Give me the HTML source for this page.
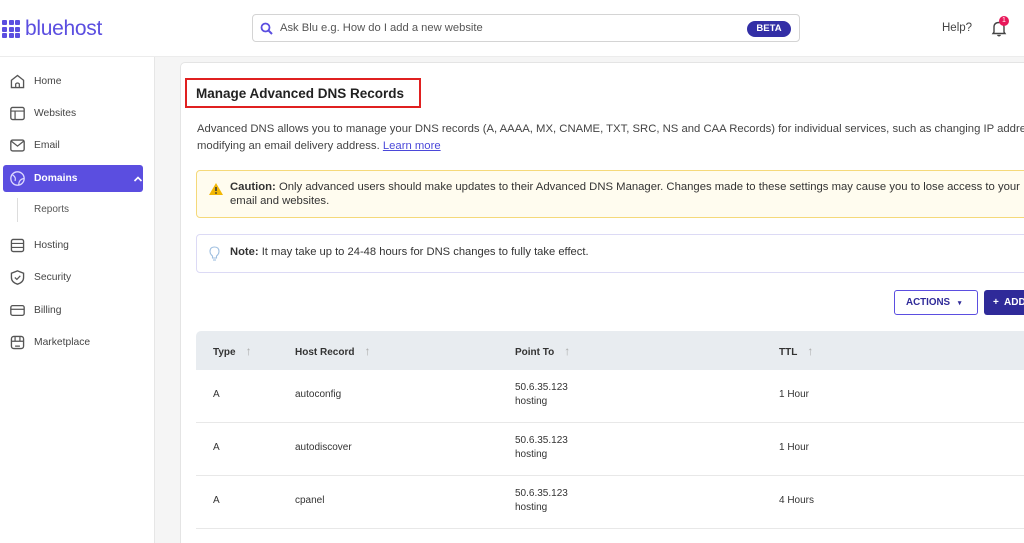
<!DOCTYPE html>
<html><head><meta charset="utf-8"><style>
*{box-sizing:border-box;margin:0;padding:0}
html,body{width:1024px;height:543px;overflow:hidden}
body{background:#f5f5f5;font-family:"Liberation Sans",sans-serif;color:#333;position:relative}
.hdr{position:absolute;left:0;top:0;width:1024px;height:57px;background:#fff;border-bottom:1px solid #ececec}
.logo{position:absolute;left:2px;top:17px;display:flex;align-items:center}
.grid{display:grid;grid-template-columns:repeat(3,5px);gap:1.5px;margin-right:5px}
.grid i{width:5px;height:5px;background:#5b4ee0;display:block;border-radius:1px}
.logo span{font-size:21px;color:#5b4ee0;letter-spacing:-0.3px;line-height:24px}
.search{position:absolute;left:252px;top:14px;width:548px;height:28px;border:1px solid #d4d4d4;border-radius:4px;font-size:11.2px;color:#555}
.search .t{position:absolute;left:27px;top:7px}
.beta{position:absolute;left:494px;top:6px;width:44px;height:16px;background:#332fa6;color:#fff;border-radius:8px;font-size:9.5px;font-weight:bold;text-align:center;line-height:16px}
.help{position:absolute;left:942px;top:22px;font-size:11.5px;color:#444}
.side{position:absolute;left:0;top:57px;width:155px;height:486px;background:#fff;border-right:1px solid #e6e6e6}
.nav{position:absolute;left:9px;font-size:10.3px;color:#444;display:flex;align-items:center}
.nav svg{margin-right:6px}
.active{position:absolute;left:3px;top:165px;width:140px;height:27px;background:#5b4ee0;border-radius:3px}
.card{position:absolute;left:180px;top:62px;width:860px;height:490px;background:#fff;border:1px solid #e4e4e4;border-radius:5px}
.title{position:absolute;left:185px;top:78px;width:236px;height:30px;border:2px solid #e02020}
.title span{position:absolute;left:9px;top:6px;font-size:13.5px;font-weight:bold;color:#222}
.p{position:absolute;left:197px;top:121px;font-size:11.3px;line-height:17px;color:#444;white-space:nowrap}
.p a{color:#4b48d9;text-decoration:underline}
.caution{position:absolute;left:196px;top:170px;width:850px;height:48px;background:#fffcef;border:1px solid #f5d97a;border-radius:4px}
.caution .t{position:absolute;left:33px;top:10px;font-size:11.3px;line-height:13.5px;color:#333;white-space:nowrap}
.note{position:absolute;left:196px;top:234px;width:850px;height:39px;border:1px solid #dcdaf5;border-radius:4px;background:#fff}
.note .t{position:absolute;left:33px;top:11px;font-size:11.2px;color:#333}
.act{position:absolute;left:894px;top:290px;width:84px;height:25px;border:1px solid #5b4ee0;border-radius:3px;font-size:9.8px;font-weight:bold;color:#2f2a99;line-height:23px;padding-left:11px}
.add{position:absolute;left:984px;top:290px;width:60px;height:25px;background:#2f2a99;border-radius:3px;font-size:10px;font-weight:bold;color:#fff;line-height:25px;padding-left:9px}
.th{position:absolute;left:196px;top:331px;width:850px;height:39px;background:#e8ecf0;border-top-left-radius:5px}
.th span{position:absolute;top:13px;font-size:10px;font-weight:bold;color:#333}
.th b{font-weight:normal;color:#aaa;margin-left:10px;font-size:12px}
.row{position:absolute;left:196px;width:850px;height:53px;border-bottom:1px solid #e8e8e8;font-size:10px;color:#333}
.row span{position:absolute}
</style></head><body>
<div class="hdr">
<div class="logo"><div class="grid"><i></i><i></i><i></i><i></i><i></i><i></i><i></i><i></i><i></i></div><span>bluehost</span></div>
<div class="search"><svg style="position:absolute;left:7px;top:7px" width="13" height="13" viewBox="0 0 13 13"><circle cx="5.5" cy="5.5" r="4" fill="none" stroke="#5b4ee0" stroke-width="1.8"/><line x1="8.5" y1="8.5" x2="12" y2="12" stroke="#5b4ee0" stroke-width="2"/></svg><span class="t">Ask Blu e.g. How do I add a new website</span><div class="beta">BETA</div></div>
<div class="help">Help?</div>
<svg style="position:absolute;left:991px;top:20px" width="16" height="17" viewBox="0 0 16 17"><path d="M3 12 L3 7 Q3 2.5 8 2.5 Q13 2.5 13 7 L13 12 L14 13.5 L2 13.5 Z" fill="none" stroke="#444" stroke-width="1.4"/><path d="M6.5 15 Q8 16.5 9.5 15" fill="none" stroke="#444" stroke-width="1.3"/></svg>
<div style="position:absolute;left:999px;top:16px;width:10px;height:10px;border-radius:5px;background:#e8185a;color:#fff;font-size:7px;text-align:center;line-height:10px">1</div>
</div>
<div class="side">
<div class="active" style="top:108px"></div>
</div>
<div class="nav" style="top:73px"><svg width="17" height="17" viewBox="0 0 14 14"><path d="M2 6 L7 2 L12 6 L12 12 L2 12 Z" fill="none" stroke="#555" stroke-width="1.1"/><path d="M5.5 12 V9 Q7 7.5 8.5 9 V12" fill="none" stroke="#555" stroke-width="1"/></svg><span style="margin-left:2px">Home</span></div>
<div class="nav" style="top:105px"><svg width="17" height="17" viewBox="0 0 14 14"><rect x="1.5" y="2" width="11" height="10" rx="1.5" fill="none" stroke="#555" stroke-width="1.1"/><path d="M1.5 5 H12.5 M5 5 V12" stroke="#555" stroke-width="1"/></svg><span style="margin-left:2px">Websites</span></div>
<div class="nav" style="top:137px"><svg width="17" height="17" viewBox="0 0 14 14"><rect x="1.5" y="2.5" width="11" height="9" rx="1.5" fill="none" stroke="#555" stroke-width="1.1"/><path d="M2 3.5 L7 7.5 L12 3.5" fill="none" stroke="#555" stroke-width="1"/></svg><span style="margin-left:2px">Email</span></div>
<div class="nav" style="top:170px;color:#fff;font-weight:bold"><svg width="17" height="17" viewBox="0 0 14 14"><circle cx="7" cy="7" r="5.5" fill="none" stroke="#dcd8ff" stroke-width="1.1"/><path d="M3 4 Q6 6 5 9 M8 12 Q8 8 12 7" fill="none" stroke="#dcd8ff" stroke-width="1"/></svg><span style="margin-left:2px">Domains</span><svg style="margin-left:55px" width="10" height="8" viewBox="0 0 10 8"><path d="M1.5 6 L5 2.5 L8.5 6" fill="none" stroke="#fff" stroke-width="1.6"/></svg></div>
<div style="position:absolute;left:17px;top:198px;width:1px;height:24px;background:#ddd"></div>
<div class="nav" style="top:204px;left:34px;font-size:10px;color:#555">Reports</div>
<div class="nav" style="top:237px"><svg width="17" height="17" viewBox="0 0 14 14"><rect x="2" y="2" width="10" height="10" rx="1.5" fill="none" stroke="#555" stroke-width="1.1"/><path d="M2 5.3 H12 M2 8.6 H12" stroke="#555" stroke-width="1"/></svg><span style="margin-left:2px">Hosting</span></div>
<div class="nav" style="top:269px"><svg width="17" height="17" viewBox="0 0 14 14"><path d="M7 1.5 L12 3.5 V7 Q12 11 7 12.5 Q2 11 2 7 V3.5 Z" fill="none" stroke="#555" stroke-width="1.1"/><path d="M4.8 7 L6.5 8.6 L9.3 5.6" fill="none" stroke="#555" stroke-width="1"/></svg><span style="margin-left:2px">Security</span></div>
<div class="nav" style="top:302px"><svg width="17" height="17" viewBox="0 0 14 14"><rect x="1.5" y="3" width="11" height="8" rx="1.5" fill="none" stroke="#555" stroke-width="1.1"/><path d="M1.5 6 H12.5" stroke="#555" stroke-width="1"/></svg><span style="margin-left:2px">Billing</span></div>
<div class="nav" style="top:334px"><svg width="17" height="17" viewBox="0 0 14 14"><rect x="2" y="2" width="10" height="10" rx="2" fill="none" stroke="#555" stroke-width="1.1"/><path d="M2 6 H12 M5 2 V6 M9 2 V6 M5 10 H9" stroke="#555" stroke-width="1"/></svg><span style="margin-left:2px">Marketplace</span></div>

<div class="card"></div>
<div class="title"><span>Manage Advanced DNS Records</span></div>
<div class="p">Advanced DNS allows you to manage your DNS records (A, AAAA, MX, CNAME, TXT, SRC, NS and CAA Records) for individual services, such as changing IP address or<br>modifying an email delivery address. <a>Learn more</a></div>
<div class="caution"><svg style="position:absolute;left:11px;top:11px" width="16" height="14" viewBox="0 0 16 14"><path d="M8 1 L15 13 H1 Z" fill="#f2b705"/><path d="M8 5 V9" stroke="#333" stroke-width="1.5"/><circle cx="8" cy="11" r="0.9" fill="#333"/></svg><div class="t"><b>Caution:</b> Only advanced users should make updates to their Advanced DNS Manager. Changes made to these settings may cause you to lose access to your<br>email and websites.</div></div>
<div class="note"><svg style="position:absolute;left:12px;top:11px" width="11" height="16" viewBox="0 0 11 16"><path d="M5.5 1 Q10 1 10 5.5 Q10 8 7.5 10 V12 H3.5 V10 Q1 8 1 5.5 Q1 1 5.5 1 Z" fill="none" stroke="#9fbfe0" stroke-width="1.1"/><path d="M4 14 H7" stroke="#9fbfe0" stroke-width="1.1"/></svg><div class="t"><b>Note:</b> It may take up to 24-48 hours for DNS changes to fully take effect.</div></div>
<div class="act">ACTIONS <span style="font-size:7px;margin-left:5px">▾</span></div>
<div class="add">+&nbsp; ADD</div>
<div class="th"><span style="left:17px">Type<b>↑</b></span><span style="left:99px">Host Record<b>↑</b></span><span style="left:319px">Point To<b>↑</b></span><span style="left:583px">TTL<b>↑</b></span></div>
<div class="row" style="top:370px"><span style="left:17px;top:19px">A</span><span style="left:99px;top:19px">autoconfig</span><span style="left:319px;top:11px;line-height:14px">50.6.35.123<br>hosting</span><span style="left:583px;top:19px">1 Hour</span></div>
<div class="row" style="top:423px"><span style="left:17px;top:19px">A</span><span style="left:99px;top:19px">autodiscover</span><span style="left:319px;top:11px;line-height:14px">50.6.35.123<br>hosting</span><span style="left:583px;top:19px">1 Hour</span></div>
<div class="row" style="top:476px"><span style="left:17px;top:19px">A</span><span style="left:99px;top:19px">cpanel</span><span style="left:319px;top:11px;line-height:14px">50.6.35.123<br>hosting</span><span style="left:583px;top:19px">4 Hours</span></div>
</body></html>
